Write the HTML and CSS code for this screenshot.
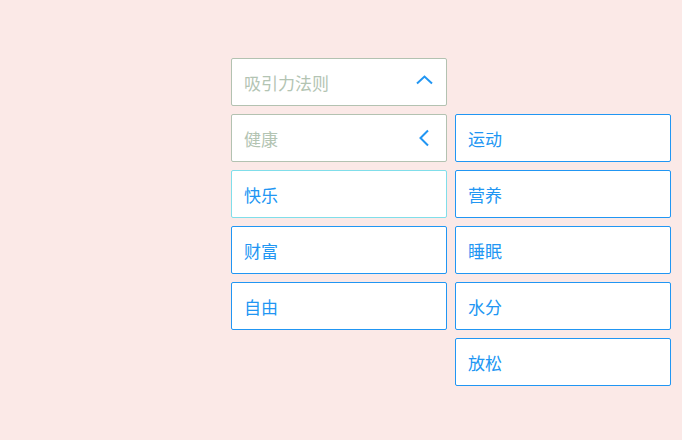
FILE: index.html
```html
<!DOCTYPE html>
<html lang="zh">
<head>
<meta charset="utf-8">
<link rel="stylesheet" href="styles.css">
</head>
<body>
<div class="menu">
  <div class="column">
    <div class="item header">
      <span class="label">吸引力法则</span>
      <svg class="chev" width="24" height="24" viewBox="0 0 24 24"><path d="M4 13.5 L11.5 6.5 L19 13.5" fill="none" stroke="#2196f3" stroke-width="2"/></svg>
    </div>
    <div class="item header">
      <span class="label">健康</span>
      <svg class="chev" width="24" height="24" viewBox="0 0 24 24"><path d="M15 4.5 L7.5 12 L15 19.5" fill="none" stroke="#2196f3" stroke-width="2"/></svg>
    </div>
    <div class="item hover"><span class="label">快乐</span></div>
    <div class="item"><span class="label">财富</span></div>
    <div class="item"><span class="label">自由</span></div>
  </div>
  <div class="column sub">
    <div class="item"><span class="label">运动</span></div>
    <div class="item"><span class="label">营养</span></div>
    <div class="item"><span class="label">睡眠</span></div>
    <div class="item"><span class="label">水分</span></div>
    <div class="item"><span class="label">放松</span></div>
  </div>
</div>
</body>
</html>
```
FILE: styles.css
```css
html, body {
  margin: 0;
  padding: 0;
  background: #fbe9e7;
}
body {
  font-family: "Noto Sans CJK SC", "Noto Sans", sans-serif;
  font-size: 17px;
  width: 682px;
  height: 440px;
  overflow: hidden;
}
.menu {
  display: flex;
  gap: 8px;
  padding: 58px 0 0 231px;
}
.column {
  display: flex;
  flex-direction: column;
  gap: 8px;
  width: 216px;
}
.column.sub {
  margin-top: 56px;
}
.item {
  box-sizing: border-box;
  height: 48px;
  background: #fff;
  border: 1px solid #2196f3;
  border-radius: 2px;
  display: flex;
  align-items: center;
  justify-content: space-between;
  padding: 0 9px 0 12px;
  color: #2196f3;
}
.item.header {
  border-color: #b3c2b1;
  color: #b3c4b3;
}
.item.hover {
  border-color: #80deea;
}
.label {
  line-height: 1;
}
.chev {
  display: block;
}
```
